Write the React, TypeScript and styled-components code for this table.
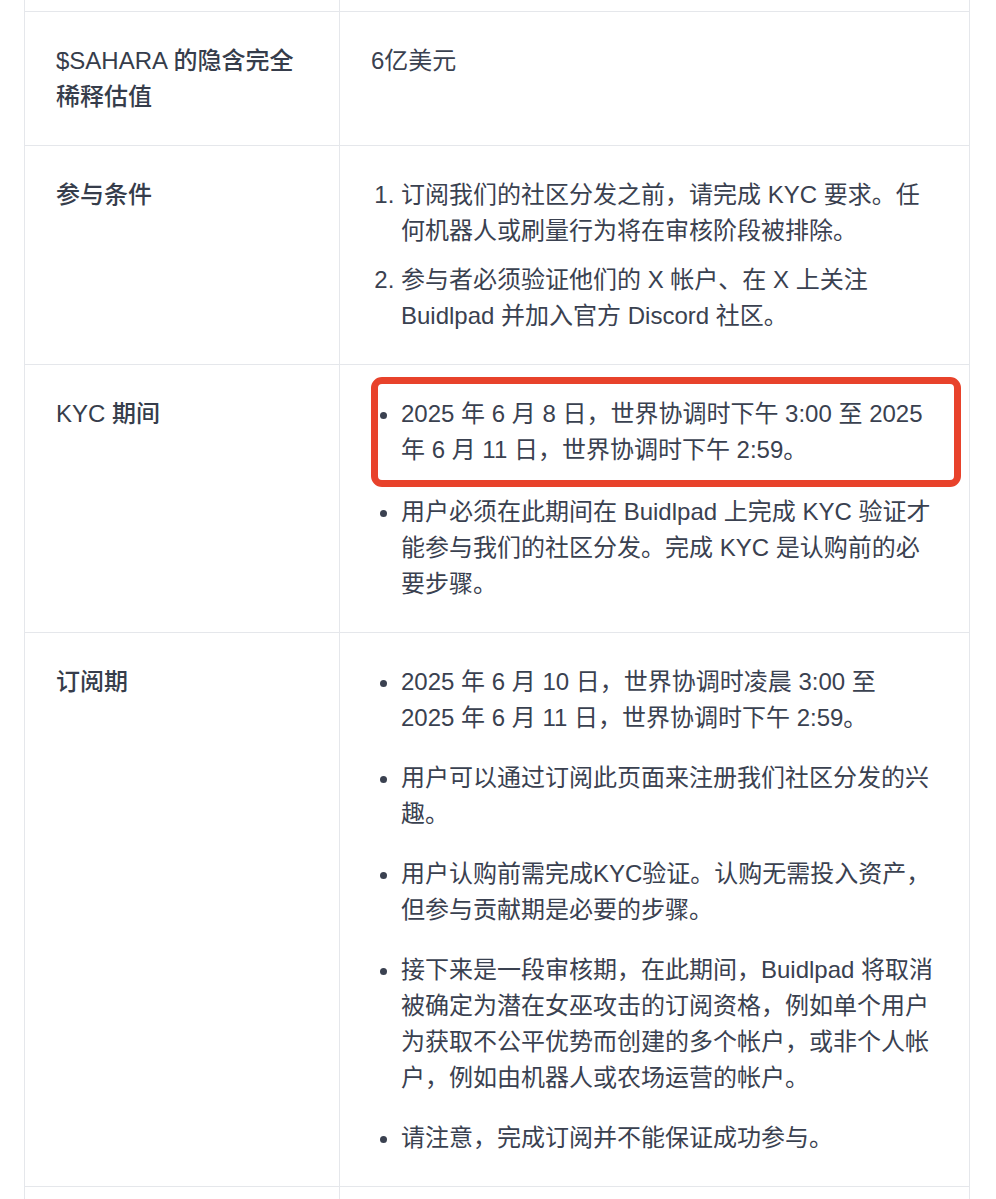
import * as React from 'react';
import styled, { createGlobalStyle } from 'styled-components';

const GlobalStyle = createGlobalStyle`
  html, body {
    margin: 0;
    padding: 0;
    background: #ffffff;
  }
  body {
    font-family: "Liberation Sans", "Noto Sans CJK SC", sans-serif;
    color: #374151;
    overflow: hidden;
  }
`;

const Page = styled.div`
  padding: 0 26px 0 24px;
  height: 1199px;
  overflow: hidden;
`;

const Table = styled.table`
  width: 946px;
  border-collapse: collapse;
  table-layout: fixed;
  font-size: 24px;
  line-height: 36px;
`;

const Row = styled.tr``;

const Cell = styled.td<{ $head?: boolean; $cut?: boolean }>`
  border: 1px solid #e5e7eb;
  border-top: ${(p) => (p.$cut ? 'none' : '1px solid #e5e7eb')};
  vertical-align: top;
  padding: ${(p) => (p.$cut ? '0' : '31px 30px 30px 31px')};
  height: ${(p) => (p.$cut ? '11px' : 'auto')};
  font-weight: ${(p) => (p.$head ? 500 : 400)};
  color: ${(p) => (p.$head ? '#363d4b' : '#3a4150')};
`;

const Plain = styled.p`
  margin: 0;
`;

const List = styled.ul<{ $gap: number; $ordered?: boolean }>`
  margin: 0;
  padding: 0 0 0 30px;
  list-style: ${(p) => (p.$ordered ? 'decimal' : 'disc')};

  li + li {
    margin-top: ${(p) => p.$gap}px;
  }
  li::marker {
    color: #3a4150;
  }
`;

const Item = styled.li`
  position: relative;
`;

const Highlight = styled.span`
  position: absolute;
  left: -30px;
  top: -19px;
  right: -22px;
  bottom: -19px;
  border: 7px solid #e8422b;
  border-radius: 11px;
  pointer-events: none;
`;

type RowData = {
  head: string;
  body: React.ReactNode;
};

const rows: RowData[] = [
  {
    head: '$SAHARA 的隐含完全稀释估值',
    body: <Plain>6亿美元</Plain>,
  },
  {
    head: '参与条件',
    body: (
      <List as="ol" $ordered $gap={13}>
        <Item>订阅我们的社区分发之前，请完成 KYC 要求。任何机器人或刷量行为将在审核阶段被排除。</Item>
        <Item>参与者必须验证他们的 X 帐户、在 X 上关注 Buidlpad 并加入官方 Discord 社区。</Item>
      </List>
    ),
  },
  {
    head: 'KYC 期间',
    body: (
      <List $gap={26}>
        <Item>
          2025 年 6 月 8 日，世界协调时下午 3:00 至 2025 年 6 月 11 日，世界协调时下午 2:59。
          <Highlight />
        </Item>
        <Item>用户必须在此期间在 Buidlpad 上完成 KYC 验证才能参与我们的社区分发。完成 KYC 是认购前的必要步骤。</Item>
      </List>
    ),
  },
  {
    head: '订阅期',
    body: (
      <List $gap={24}>
        <Item>
          2025 年 6 月 10 日，世界协调时凌晨 3:00 至<br />
          2025 年 6 月 11 日，世界协调时下午 2:59。
        </Item>
        <Item>用户可以通过订阅此页面来注册我们社区分发的兴趣。</Item>
        <Item>用户认购前需完成KYC验证。认购无需投入资产，但参与贡献期是必要的步骤。</Item>
        <Item>接下来是一段审核期，在此期间，Buidlpad 将取消被确定为潜在女巫攻击的订阅资格，例如单个用户为获取不公平优势而创建的多个帐户，或非个人帐户，例如由机器人或农场运营的帐户。</Item>
        <Item>请注意，完成订阅并不能保证成功参与。</Item>
      </List>
    ),
  },
];

export default function App() {
  return (
    <>
      <GlobalStyle />
      <Page>
        <Table>
          <colgroup>
            <col style={{ width: 315 }} />
            <col />
          </colgroup>
          <tbody>
            <Row>
              <Cell $cut />
              <Cell $cut />
            </Row>
            {rows.map((r) => (
              <Row key={r.head}>
                <Cell $head>{r.head}</Cell>
                <Cell>{r.body}</Cell>
              </Row>
            ))}
            <Row>
              <Cell $cut style={{ height: 60 }} />
              <Cell $cut />
            </Row>
          </tbody>
        </Table>
      </Page>
    </>
  );
}
